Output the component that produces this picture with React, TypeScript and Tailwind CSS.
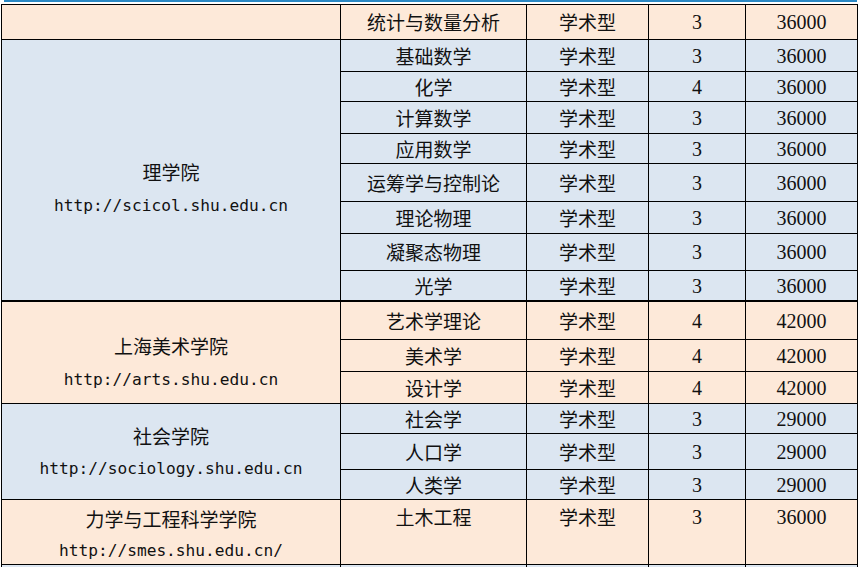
import React from 'react'

type Major = {
    name: string
    kind: string
    years: string
    fee: string
    last?: boolean
    divider?: boolean
}

type Group = {
    college?: string
    url?: string
    bg: string
    pad: string
    leading: string
    majors: Major[]
}

const PEACH = 'bg-[#fde9d9]'
const BLUE = 'bg-[#dce6f1]'

const groups: Group[] = [
    {
        bg: PEACH,
        pad: 'pt-0',
        leading: 'leading-[34px]',
        majors: [{ name: '统计与数量分析', kind: '学术型', years: '3', fee: '36000' }],
    },
    {
        college: '理学院',
        url: 'http://scicol.shu.edu.cn',
        bg: BLUE,
        pad: 'pt-[115px]',
        leading: 'leading-[34px]',
        majors: [
            { name: '基础数学', kind: '学术型', years: '3', fee: '36000' },
            { name: '化学', kind: '学术型', years: '4', fee: '36000' },
            { name: '计算数学', kind: '学术型', years: '3', fee: '36000' },
            { name: '应用数学', kind: '学术型', years: '3', fee: '36000' },
            { name: '运筹学与控制论', kind: '学术型', years: '3', fee: '36000' },
            { name: '理论物理', kind: '学术型', years: '3', fee: '36000' },
            { name: '凝聚态物理', kind: '学术型', years: '3', fee: '36000' },
            { name: '光学', kind: '学术型', years: '3', fee: '36000' },
        ],
    },
    {
        college: '上海美术学院',
        url: 'http://arts.shu.edu.cn',
        bg: PEACH,
        pad: 'pt-[27px]',
        leading: 'leading-[34px]',
        majors: [
            { name: '艺术学理论', kind: '学术型', years: '4', fee: '42000', divider: true },
            { name: '美术学', kind: '学术型', years: '4', fee: '42000' },
            { name: '设计学', kind: '学术型', years: '4', fee: '42000' },
        ],
    },
    {
        college: '社会学院',
        url: 'http://sociology.shu.edu.cn',
        bg: BLUE,
        pad: 'pt-[15px]',
        leading: 'leading-[33px]',
        majors: [
            { name: '社会学', kind: '学术型', years: '3', fee: '29000' },
            { name: '人口学', kind: '学术型', years: '3', fee: '29000' },
            { name: '人类学', kind: '学术型', years: '3', fee: '29000' },
        ],
    },
    {
        college: '力学与工程科学学院',
        url: 'http://smes.shu.edu.cn/',
        bg: PEACH,
        pad: 'pt-[3px]',
        leading: 'leading-[32px]',
        majors: [{ name: '土木工程', kind: '学术型', years: '3', fee: '36000', last: true }],
    },
]

const cjk = "font-['Noto_Sans_CJK_SC',sans-serif] text-[19px]"
const num = "font-['Liberation_Serif',serif] text-[20px]"

function Cell({ bg, m, children, font }: { bg: string; m: Major; children: React.ReactNode; font: string }) {
    const place = m.last ? 'items-start pt-[5px]' : 'items-center'
    return (
        <div
            className={`flex justify-center ${place} ${bg} ${font} leading-[24px] text-[#111] ${
                m.divider ? 'border-t border-black' : ''
            }`}
        >
            {children}
        </div>
    )
}

export default function App() {
    return (
        <div className="h-[567px] w-[861px] overflow-hidden bg-white">
            <div className="h-[4px] pl-[4px]">
                <div className="h-[2px] w-[853px] bg-[#2a88c4]" />
            </div>
            <div className="ml-[1px] grid w-[857px] grid-cols-[338px_185px_121px_96px_111px] grid-rows-[34px_31px_29px_31px_29px_37px_31px_36px_29px_38px_31px_31px_29px_35px_29px_64px_40px] gap-[1px] bg-black p-[1px]">
                {groups.map((g, gi) => (
                    <React.Fragment key={gi}>
                        {g.majors.map((m, mi) => (
                            <React.Fragment key={mi}>
                                {mi === 0 && (
                                    <div
                                        className={`${g.bg} ${g.pad} text-center text-[#111] ${
                                            m.divider ? 'border-t border-black' : ''
                                        } ${
                                            g.majors.length === 8
                                                ? 'row-span-8'
                                                : g.majors.length === 3
                                                ? 'row-span-3'
                                                : 'row-span-1'
                                        }`}
                                    >
                                        {g.college && (
                                            <>
                                                <div className={`${cjk} ${g.leading}`}>{g.college}</div>
                                                <div
                                                    className={`font-['DejaVu_Sans_Mono',monospace] text-[16.2px] ${g.leading}`}
                                                >
                                                    {g.url}
                                                </div>
                                            </>
                                        )}
                                    </div>
                                )}
                                <Cell bg={g.bg} m={m} font={cjk}>
                                    {m.name}
                                </Cell>
                                <Cell bg={g.bg} m={m} font={cjk}>
                                    {m.kind}
                                </Cell>
                                <Cell bg={g.bg} m={m} font={num}>
                                    {m.years}
                                </Cell>
                                <Cell bg={g.bg} m={m} font={num}>
                                    {m.fee}
                                </Cell>
                            </React.Fragment>
                        ))}
                    </React.Fragment>
                ))}
                <div className={BLUE} />
                <div className={BLUE} />
                <div className={BLUE} />
                <div className={BLUE} />
                <div className={BLUE} />
            </div>
        </div>
    )
}
